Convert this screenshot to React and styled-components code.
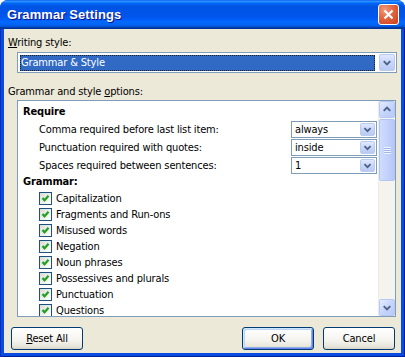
import React from "react";
import styled, { createGlobalStyle } from "styled-components";

const GlobalStyle = createGlobalStyle`
  html, body {
    margin: 0;
    padding: 0;
    background: #ffffff;
  }
  body {
    font-family: "DejaVu Sans Condensed", "Liberation Sans", sans-serif;
    font-size: 11px;
    letter-spacing: -0.15px;
    color: #000;
  }
`;

const Window = styled.div`
  width: 405px;
  height: 357px;
  display: flex;
  flex-direction: column;
  border-radius: 8px 8px 0 0;
  overflow: hidden;
  background: #0a45dc;
`;

const TitleBar = styled.div`
  flex: none;
  height: 29px;
  display: flex;
  align-items: center;
  justify-content: space-between;
  padding: 0 6px 0 7px;
  background: linear-gradient(
    180deg,
    #0058ee 0%,
    #3593ff 4%,
    #288eff 6%,
    #127dff 8%,
    #036ffc 10%,
    #0262ee 14%,
    #0057e5 20%,
    #0054e3 24%,
    #0055eb 56%,
    #005bf5 66%,
    #026afe 76%,
    #0062ef 86%,
    #0052d6 92%,
    #0040ab 94%,
    #003092 100%
  );
`;

const Title = styled.span`
  font-family: "Liberation Sans", sans-serif;
  font-weight: bold;
  font-size: 13px;
  color: #fff;
  text-shadow: 1px 1px #0f1089;
  letter-spacing: 0.1px;
`;

const CloseButton = styled.div`
  width: 21px;
  height: 21px;
  box-sizing: border-box;
  border: 1px solid #fff;
  border-radius: 3px;
  background: radial-gradient(circle at 30% 25%, #f29a7c 0%, #e2643f 45%, #c7401b 100%);
  display: flex;
  align-items: center;
  justify-content: center;
`;

const Frame = styled.div`
  flex: 1;
  display: flex;
  padding: 0 4px 4px;
  background: #0b4ade;
  box-shadow: inset 1px 0 #0a2fb5, inset -1px 0 #001ea0, inset 0 -1px #001ea0;
`;

const Client = styled.div`
  flex: 1;
  display: flex;
  flex-direction: column;
  padding: 7px 4px 0 4px;
  background: #ece9d8;
`;

const Label = styled.div`
  height: 13px;
  line-height: 13px;
  margin-top: ${(p) => p.$top || 0}px;
  white-space: nowrap;
`;

const Select = styled.div`
  margin: 3px 0 0 9px;
  height: 21px;
  box-sizing: border-box;
  border: 1px solid #7f9db9;
  background: #fff;
  display: flex;
  align-items: center;
`;

const Highlight = styled.div`
  flex: 1;
  height: 16px;
  margin: 0 3px 0 2px;
  box-sizing: border-box;
  border: 1px dotted #1c1c1c;
  background: #316ac5;
  color: #fff;
  line-height: 14px;
`;

const DropButton = styled.div`
  flex: none;
  width: ${(p) => p.$w || 15}px;
  align-self: stretch;
  margin: 1px;
  box-sizing: border-box;
  border: 1px solid #b9cbf3;
  border-radius: 2px;
  background: linear-gradient(180deg, #e1eafe 0%, #c8d6fb 45%, #b9cbf3 100%);
  display: flex;
  align-items: center;
  justify-content: center;
`;

const ListBox = styled.div`
  margin: 2px 1px 0 9px;
  height: 217px;
  box-sizing: border-box;
  border: 1px solid #7f9db9;
  background: #fff;
  display: flex;
  overflow: hidden;
`;

const ListContent = styled.div`
  flex: 1;
  padding-top: 3px;
  overflow: hidden;
`;

const HeaderRow = styled.div`
  height: 16px;
  line-height: 16px;
  padding-left: 5px;
  font-weight: bold;
`;

const OptionRow = styled.div`
  height: 18px;
  display: flex;
  align-items: center;
  justify-content: space-between;
  padding-left: 21px;
`;

const Combo = styled.div`
  width: 86px;
  height: 17px;
  margin-right: 1px;
  box-sizing: border-box;
  border: 1px solid #7f9db9;
  background: #fff;
  display: flex;
  align-items: center;
  line-height: 15px;
`;

const ComboText = styled.span`
  flex: 1;
  padding-left: 3px;
`;

const CheckRow = styled.div`
  height: 16px;
  display: flex;
  align-items: center;
  gap: 4px;
  padding-left: 21px;
`;

const CheckBox = styled.div`
  width: 13px;
  height: 13px;
  box-sizing: border-box;
  border: 1px solid #1c5180;
  background: linear-gradient(135deg, #dcdcd7 0%, #f5f5f2 70%, #ffffff 100%);
  display: flex;
  align-items: center;
  justify-content: center;
`;

const ScrollBar = styled.div`
  flex: none;
  width: 17px;
  display: flex;
  flex-direction: column;
  background: #f4f3ee;
  border-left: 1px solid #eeede5;
  box-sizing: border-box;
`;

const ScrollArrow = styled.div`
  height: 17px;
  box-sizing: border-box;
  border: 1px solid #b6c9f4;
  border-radius: 2px;
  background: linear-gradient(135deg, #e4ecfe 0%, #c6d5fc 50%, #b7c9f5 100%);
  display: flex;
  align-items: center;
  justify-content: center;
`;

const ScrollTrack = styled.div`
  flex: 1;
  padding-top: 1px;
`;

const Thumb = styled.div`
  height: 62px;
  box-sizing: border-box;
  border: 1px solid #b2c6f4;
  border-radius: 2px;
  background: linear-gradient(90deg, #cfdcfd 0%, #c3d3fc 50%, #b5c8f6 100%);
  display: flex;
  align-items: center;
  justify-content: center;
`;

const Grip = styled.div`
  width: 7px;
  height: 7px;
  background: repeating-linear-gradient(180deg, #eef3fe 0 1px, #9fb6ee 1px 2px);
`;

const ButtonRow = styled.div`
  margin-top: 10px;
  display: flex;
  padding: 0 2px 0 3px;
`;

const Button = styled.div`
  width: 72px;
  height: 23px;
  box-sizing: border-box;
  border: 1px solid #003c74;
  border-radius: 3px;
  background: linear-gradient(180deg, #ffffff 0%, #f4f3ee 60%, #e6e3d9 90%, #d6d0c5 100%);
  display: flex;
  align-items: center;
  justify-content: center;
  margin-left: ${(p) => (p.$push ? "auto" : p.$gap ? `${p.$gap}px` : "0")};
  box-shadow: ${(p) =>
    p.$default
      ? "inset 1px 1px 0 #cee7ff, inset -1px -1px 0 #6982ee, inset 2px 2px 0 #bcd4f6, inset -2px -2px 0 #89ade4"
      : "none"};
`;

const Chevron = ({ up, size = 15 }) => (
  <svg width={size} height={size} viewBox="0 0 15 15">
    <path
      d={up ? "M4 9 L7.5 5.5 L11 9" : "M4 6 L7.5 9.5 L11 6"}
      stroke="#4d6185"
      strokeWidth="2"
      fill="none"
    />
  </svg>
);

const Check = () => (
  <svg width="11" height="11" viewBox="0 0 11 11">
    <polyline points="2.5,5 4.5,7.3 8.5,2.8" stroke="#21a121" strokeWidth="2.2" fill="none" />
  </svg>
);

const options = [
  { label: "Comma required before last list item:", value: "always" },
  { label: "Punctuation required with quotes:", value: "inside" },
  { label: "Spaces required between sentences:", value: "1" },
];

const checks = [
  "Capitalization",
  "Fragments and Run-ons",
  "Misused words",
  "Negation",
  "Noun phrases",
  "Possessives and plurals",
  "Punctuation",
  "Questions",
];

const App = () => {
  return (
    <>
      <GlobalStyle />
      <Window>
        <TitleBar>
          <Title>Grammar Settings</Title>
          <CloseButton>
            <svg width="19" height="19" viewBox="0 0 19 19">
              <path d="M5.5 5.5 L13.5 13.5 M13.5 5.5 L5.5 13.5" stroke="#fff" strokeWidth="2.2" />
            </svg>
          </CloseButton>
        </TitleBar>
        <Frame>
          <Client>
            <Label>
              <u>W</u>riting style:
            </Label>
            <Select>
              <Highlight>Grammar &amp; Style</Highlight>
              <DropButton $w={16}>
                <Chevron />
              </DropButton>
            </Select>
            <Label $top={12}>
              Grammar and style <u>o</u>ptions:
            </Label>
            <ListBox>
              <ListContent>
                <HeaderRow>Require</HeaderRow>
                {options.map((o) => (
                  <OptionRow key={o.label}>
                    <span>{o.label}</span>
                    <Combo>
                      <ComboText>{o.value}</ComboText>
                      <DropButton>
                        <Chevron />
                      </DropButton>
                    </Combo>
                  </OptionRow>
                ))}
                <HeaderRow>Grammar:</HeaderRow>
                {checks.map((c) => (
                  <CheckRow key={c}>
                    <CheckBox>
                      <Check />
                    </CheckBox>
                    <span>{c}</span>
                  </CheckRow>
                ))}
              </ListContent>
              <ScrollBar>
                <ScrollArrow>
                  <Chevron up />
                </ScrollArrow>
                <ScrollTrack>
                  <Thumb>
                    <Grip />
                  </Thumb>
                </ScrollTrack>
                <ScrollArrow>
                  <Chevron />
                </ScrollArrow>
              </ScrollBar>
            </ListBox>
            <ButtonRow>
              <Button>
                <span>
                  <u>R</u>eset All
                </span>
              </Button>
              <Button $push $default>
                OK
              </Button>
              <Button $gap={9}>Cancel</Button>
            </ButtonRow>
          </Client>
        </Frame>
      </Window>
    </>
  );
};

export default App;
